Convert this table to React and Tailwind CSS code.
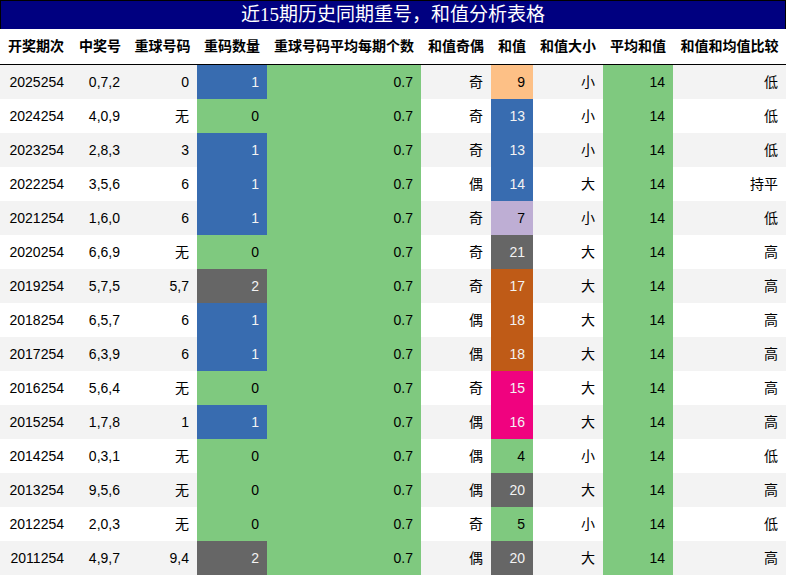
const rows = [
  ["2025254", "0,7,2", "0", 1, "奇", 9, "小", "低"],
  ["2024254", "4,0,9", "无", 0, "奇", 13, "小", "低"],
  ["2023254", "2,8,3", "3", 1, "奇", 13, "小", "低"],
  ["2022254", "3,5,6", "6", 1, "偶", 14, "大", "持平"],
  ["2021254", "1,6,0", "6", 1, "奇", 7, "小", "低"],
  ["2020254", "6,6,9", "无", 0, "奇", 21, "大", "高"],
  ["2019254", "5,7,5", "5,7", 2, "奇", 17, "大", "高"],
  ["2018254", "6,5,7", "6", 1, "偶", 18, "大", "高"],
  ["2017254", "6,3,9", "6", 1, "偶", 18, "大", "高"],
  ["2016254", "5,6,4", "无", 0, "奇", 15, "大", "高"],
  ["2015254", "1,7,8", "1", 1, "偶", 16, "大", "高"],
  ["2014254", "0,3,1", "无", 0, "偶", 4, "小", "低"],
  ["2013254", "9,5,6", "无", 0, "偶", 20, "大", "高"],
  ["2012254", "2,0,3", "无", 0, "奇", 5, "小", "低"],
  ["2011254", "4,9,7", "9,4", 2, "偶", 20, "大", "高"],
];

const headers = [
  "开奖期次",
  "中奖号",
  "重球号码",
  "重码数量",
  "重球号码平均每期个数",
  "和值奇偶",
  "和值",
  "和值大小",
  "平均和值",
  "和值和均值比较",
];

const countColor = {
  0: "bg-[#7fc97f] text-black",
  1: "bg-[#386cb0] text-[#f3f3f3]",
  2: "bg-[#666666] text-[#f3f3f3]",
};

const sumColor = {
  4: "bg-[#7fc97f] text-black",
  5: "bg-[#7fc97f] text-black",
  7: "bg-[#beaed4] text-black",
  9: "bg-[#fdc086] text-black",
  13: "bg-[#386cb0] text-[#f3f3f3]",
  14: "bg-[#386cb0] text-[#f3f3f3]",
  15: "bg-[#f0027f] text-[#f3f3f3]",
  16: "bg-[#f0027f] text-[#f3f3f3]",
  17: "bg-[#bf5b17] text-[#f3f3f3]",
  18: "bg-[#bf5b17] text-[#f3f3f3]",
  20: "bg-[#666666] text-[#f3f3f3]",
  21: "bg-[#666666] text-[#f3f3f3]",
};

const grid =
  "grid grid-cols-[72px_56px_69px_70px_154px_70px_42px_70px_70px_113px]";

function Cell({ children, className = "" }) {
  return (
    <div className={`flex items-center justify-end pr-2 ${className}`}>
      {children}
    </div>
  );
}

export default function App() {
  return (
    <div className="w-[786px] h-[576px] bg-white font-['Liberation_Sans','Noto_Sans_CJK_SC',sans-serif] text-[14px] text-black">
      <div className="h-[29px] border-t border-x border-black bg-[#000080] text-white text-[19px] leading-[28px] text-center font-['Liberation_Serif','Noto_Sans_CJK_SC',serif]">
        近15期历史同期重号，和值分析表格
      </div>
      <div className={`${grid} h-[36px] border-b border-black font-bold`}>
        {headers.map((h) => (
          <div key={h} className="flex items-center justify-center">
            {h}
          </div>
        ))}
      </div>
      {rows.map((r, i) => (
        <div
          key={r[0]}
          className={`${grid} h-[34px] ${i % 2 === 0 ? "bg-[#f3f3f3]" : "bg-white"}`}
        >
          <Cell>{r[0]}</Cell>
          <Cell>{r[1]}</Cell>
          <Cell>{r[2]}</Cell>
          <Cell className={countColor[r[3]]}>{r[3]}</Cell>
          <Cell className="bg-[#7fc97f]">0.7</Cell>
          <Cell>{r[4]}</Cell>
          <Cell className={sumColor[r[5]]}>{r[5]}</Cell>
          <Cell>{r[6]}</Cell>
          <Cell className="bg-[#7fc97f]">14</Cell>
          <Cell>{r[7]}</Cell>
        </div>
      ))}
    </div>
  );
}
